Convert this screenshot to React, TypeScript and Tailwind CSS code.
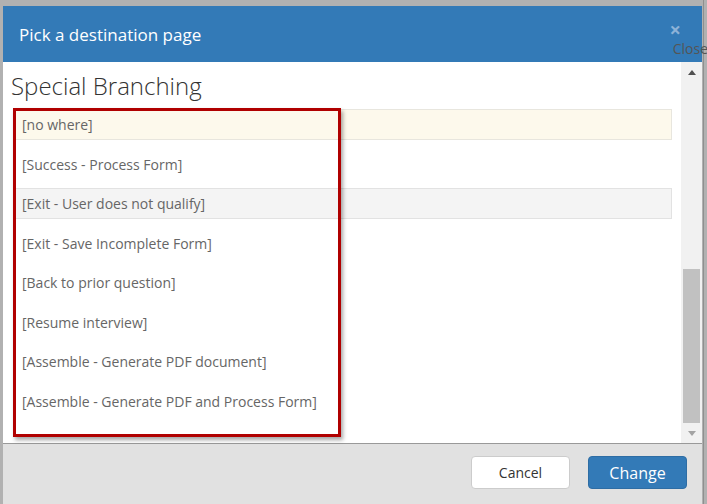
import React from "react";

const items = [
  { label: "[no where]", tone: "selected" },
  { label: "[Success - Process Form]", tone: "" },
  { label: "[Exit - User does not qualify]", tone: "hover" },
  { label: "[Exit - Save Incomplete Form]", tone: "" },
  { label: "[Back to prior question]", tone: "" },
  { label: "[Resume interview]", tone: "" },
  { label: "[Assemble - Generate PDF document]", tone: "" },
  { label: "[Assemble - Generate PDF and Process Form]", tone: "" },
];

function Row({ label, tone }: { label: string; tone: string }) {
  const toneClass =
    tone === "selected"
      ? "bg-[#fdf9ec] border-[#e8e6de]"
      : tone === "hover"
        ? "bg-[#f4f4f4] border-[#e2e2e2]"
        : "border-transparent";
  return (
    <div className={`h-[31px] border px-[7px] flex items-center text-[14px] text-[#666] ${toneClass}`}>
      {label}
    </div>
  );
}

export default function App() {
  return (
    <div
      className="relative w-[707px] h-[504px] overflow-hidden bg-[#b1b1b1] pt-[6px] pl-[3px] pr-[5px]"
      style={{ fontFamily: '"Open Sans", "Liberation Sans", sans-serif' }}
    >
      {/* page behind the modal */}
      <div className="absolute right-[3px] top-0 bottom-0 w-px bg-[#8f8f8f]" />

      <div className="relative flex flex-col h-full bg-white">
        {/* header */}
        <div className="relative h-[56px] shrink-0 bg-[#337ab7] px-[16px] flex items-center">
          <h4 className="text-white text-[17px] leading-none">Pick a destination page</h4>
          <span className="absolute right-[21px] top-[18px] text-[20px] font-bold leading-[12px] text-[#8db2d8]">
            ×
          </span>
          <span className="absolute -right-[6px] top-[36px] text-[14px] leading-[14px] text-[#555]">
            Close
          </span>
        </div>

        {/* body */}
        <div className="flex-1 flex min-h-0">
          <div className="flex-1 pl-[11px] pr-[9px] pt-[7px]">
            <h2 className="-ml-[3px] text-[24px] font-light leading-[34px] text-[#333] mb-[6px]">
              Special Branching
            </h2>
            <div className="flex flex-col gap-[8.5px]">
              {items.map((it) => (
                <Row key={it.label} label={it.label} tone={it.tone} />
              ))}
            </div>
          </div>
          {/* scrollbar */}
          <div className="w-[21px] shrink-0 bg-[#f1f1f1] flex flex-col items-center">
            <div className="h-[21px] flex items-center justify-center">
              <div className="w-0 h-0 border-l-[4px] border-r-[4px] border-b-[5px] border-l-transparent border-r-transparent border-b-[#505050]" />
            </div>
            <div className="flex-1 w-full flex flex-col justify-end px-[2px]">
              <div className="h-[154px] bg-[#c1c1c1]" />
            </div>
            <div className="h-[20px] flex items-center justify-center">
              <div className="w-0 h-0 border-l-[4px] border-r-[4px] border-t-[5px] border-l-transparent border-r-transparent border-t-[#a3a3a3]" />
            </div>
          </div>
        </div>

        {/* footer */}
        <div className="h-[61px] shrink-0 bg-[#e1e1e1] border-t border-[#999] flex justify-end items-start gap-[18px] pt-[12px] pr-[15px]">
          <button className="w-[99px] h-[33px] rounded-[4px] bg-white border border-[#ccc] text-[14px] text-[#333]">
            Cancel
          </button>
          <button className="w-[99px] h-[33px] rounded-[4px] bg-[#337ab7] border border-[#2e6da4] text-[16px] text-white">
            Change
          </button>
        </div>
      </div>

      {/* annotation box */}
      <div className="absolute left-[13px] top-[108px] w-[328px] h-[329px] border-[3px] border-[#b00000] shadow-[2px_3px_4px_rgba(0,0,0,0.35)]" />
    </div>
  );
}
